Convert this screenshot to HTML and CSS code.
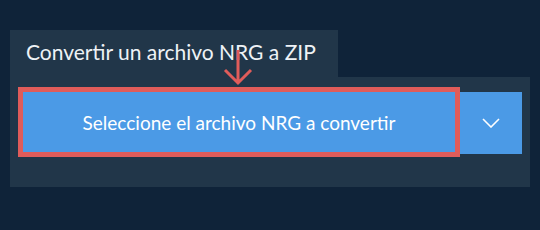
FILE: index.html
```html
<!DOCTYPE html>
<html lang="es">
<head>
    <meta charset="UTF-8">
    <meta name="viewport" content="width=device-width, initial-scale=1.0">
    <title>Convertir NRG a ZIP</title>
    <link rel="stylesheet" href="styles.css">
</head>
<body>
    <div class="converter">
        <div class="tab">Convertir un archivo NRG a ZIP</div>
        <div class="panel">
            <div class="pick-box">
                <button class="pick-button">Seleccione el archivo NRG a convertir</button>
            </div>
            <button class="drop-button" aria-label="Más opciones">
                <svg width="18" height="10" viewBox="0 0 18 10">
                    <path d="M1 1 L9 9 L17 1" fill="none" stroke="#ffffff" stroke-width="1.6"/>
                </svg>
            </button>
            <!-- flecha que apunta al botón -->
            <svg class="hint-arrow" width="30" height="36" viewBox="0 0 30 36">
                <path d="M15 0 L15 33 M2 20 L15 33 L28 20" fill="none" stroke="#e05c5a" stroke-width="3"/>
            </svg>
        </div>
    </div>
</body>
</html>
```

FILE: styles.css
```css
body {
    margin: 0;
    background-color: #0f2339;
    font-family: 'Lato', 'Liberation Sans', sans-serif;
}
.converter {
    padding: 30px 10px 0 10px;
    width: 520px;
}
.tab {
    display: inline-block;
    width: 312px;
    height: 47px;
    padding-left: 16px;
    background-color: #213649;
    color: #eef2f6;
    font-size: 21px;
    line-height: 44px;
    box-sizing: content-box;
}
.panel {
    position: relative;
    display: flex;
    align-items: flex-start;
    height: 100px;
    padding: 10px 8px 0 8px;
    background-color: #213649;
}
.pick-box {
    border: 5px solid #e05c5a;
}
.pick-button {
    display: block;
    width: 432px;
    height: 60px;
    border: none;
    background-color: #4b9ae6;
    color: #ffffff;
    font-family: 'Lato', 'Liberation Sans', sans-serif;
    font-size: 19px;
    cursor: pointer;
}
.drop-button {
    display: flex;
    align-items: center;
    justify-content: center;
    width: 62px;
    height: 62px;
    margin-top: 5px;
    border: none;
    background-color: #4b9ae6;
    cursor: pointer;
}
.hint-arrow {
    position: absolute;
    left: 213px;
    top: -27px;
}
```
